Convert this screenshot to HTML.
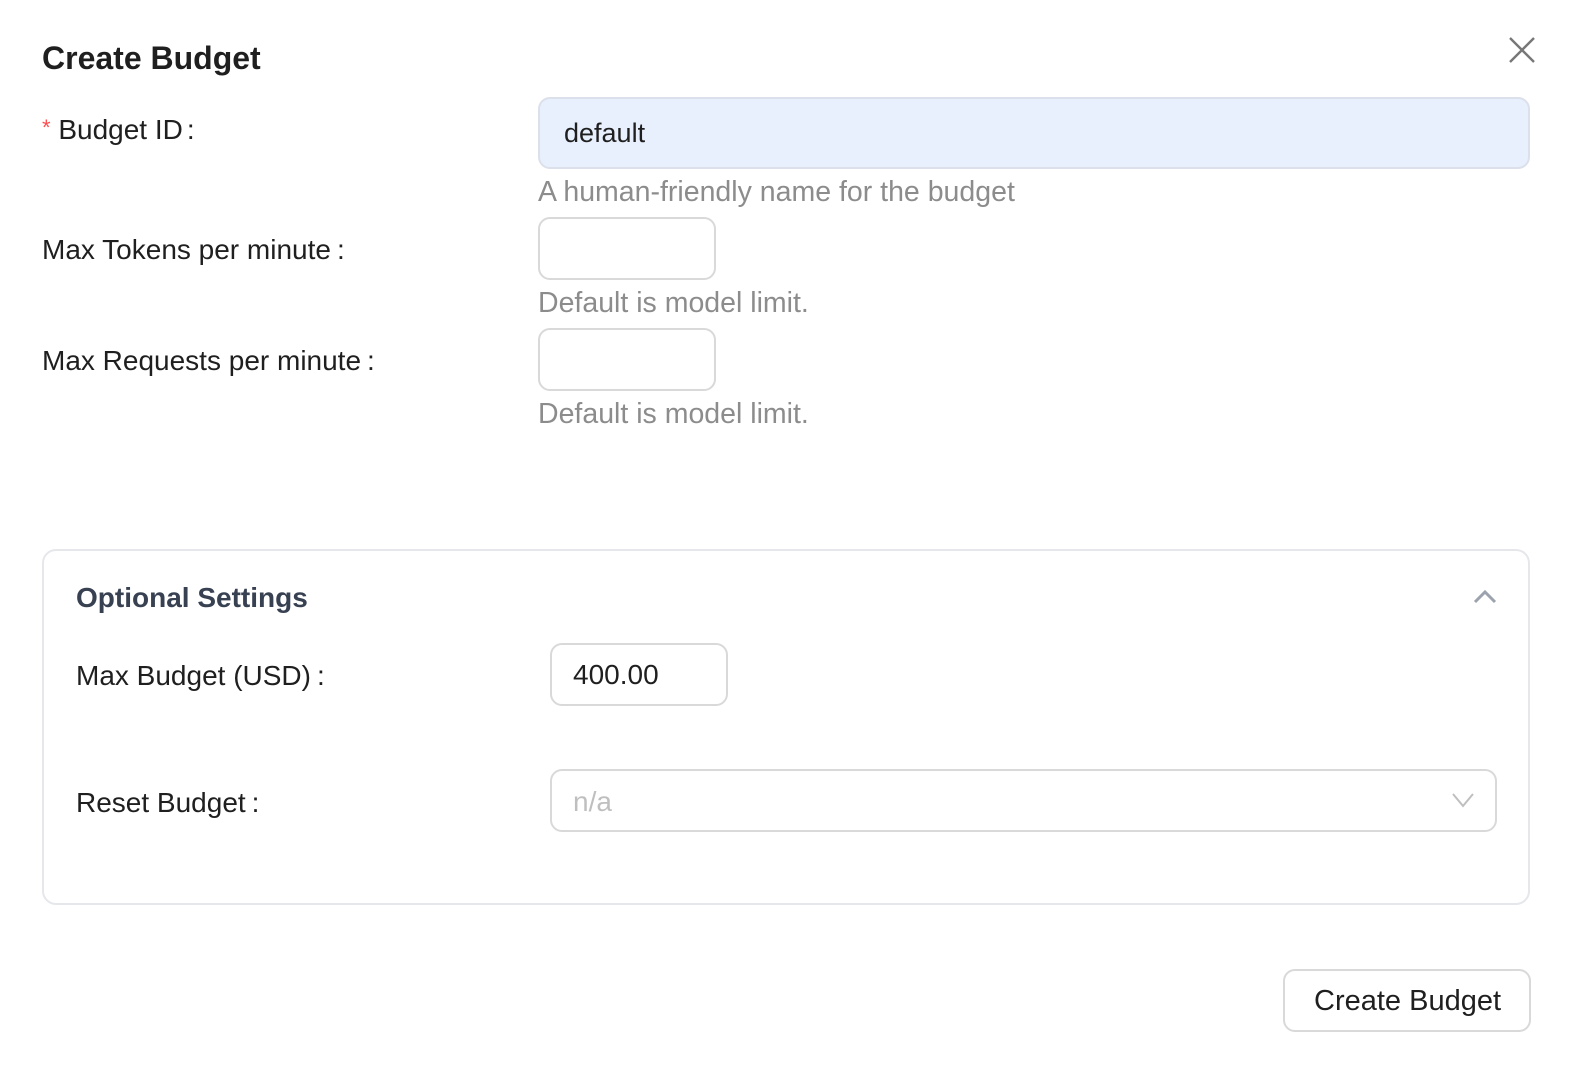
<!DOCTYPE html>
<html><head><meta charset="utf-8"><style>
*{box-sizing:border-box;margin:0;padding:0}
body{width:1584px;height:1066px;background:#fff;font-family:"Liberation Sans",sans-serif;color:#1f1f1f;position:relative;overflow:hidden}
.a{position:absolute;white-space:nowrap}
.lbl{font-size:28px;color:#1f1f1f}
.help{font-size:28.5px;color:#8c8c8c}
.box{position:absolute;border:2px solid #d9d9d9;border-radius:12px;background:#fff}
</style></head><body>
<div class="a" style="left:42px;top:40px;font-size:32px;font-weight:bold;color:#1f1f1f">Create Budget</div>
<svg class="a" style="left:1508px;top:36px" width="28" height="28" viewBox="0 0 28 28"><path d="M2 2L26 26M26 2L2 26" stroke="#777" stroke-width="2.4"/></svg>

<div class="a lbl" style="left:42px;top:114px"><span style="color:#ff4d4f;font-size:22px;vertical-align:4px">*</span> Budget ID<span style="margin-left:4px">:</span></div>
<div class="box" style="left:538px;top:97px;width:992px;height:72px;background:#e8f0fe;border-color:#dbe0ea"></div>
<div class="a" style="left:564px;top:118px;font-size:27px">default</div>
<div class="a help" style="left:538px;top:176px">A human-friendly name for the budget</div>

<div class="a lbl" style="left:42px;top:234px">Max Tokens per minute<span style="margin-left:6px">:</span></div>
<div class="box" style="left:538px;top:217px;width:178px;height:63px"></div>
<div class="a help" style="left:538px;top:287px">Default is model limit.</div>

<div class="a lbl" style="left:42px;top:345px">Max Requests per minute<span style="margin-left:6px">:</span></div>
<div class="box" style="left:538px;top:328px;width:178px;height:63px"></div>
<div class="a help" style="left:538px;top:398px">Default is model limit.</div>

<div class="box" style="left:42px;top:549px;width:1488px;height:356px;border-color:#e5e7eb;border-radius:14px"></div>
<div class="a" style="left:76px;top:582px;font-size:28px;font-weight:bold;color:#374151">Optional Settings</div>
<svg class="a" style="left:1472px;top:588px" width="26" height="18" viewBox="0 0 26 18"><path d="M3 14L13 4L23 14" stroke="#9ca3af" stroke-width="3" fill="none"/></svg>

<div class="a lbl" style="left:76px;top:660px">Max Budget (USD)<span style="margin-left:6px">:</span></div>
<div class="box" style="left:550px;top:643px;width:178px;height:63px"></div>
<div class="a" style="left:573px;top:659px;font-size:28px">400.00</div>

<div class="a lbl" style="left:76px;top:787px">Reset Budget<span style="margin-left:6px">:</span></div>
<div class="box" style="left:550px;top:769px;width:947px;height:63px"></div>
<div class="a" style="left:573px;top:786px;font-size:28px;color:#bfbfbf">n/a</div>
<svg class="a" style="left:1451px;top:791px" width="24" height="18" viewBox="0 0 24 18"><path d="M2 3L12 15L22 3" stroke="#bfbfbf" stroke-width="2" fill="none"/></svg>

<div class="box" style="left:1283px;top:969px;width:248px;height:63px"></div>
<div class="a" style="left:1314px;top:985px;font-size:29px;color:#1f1f1f">Create Budget</div>
</body></html>
